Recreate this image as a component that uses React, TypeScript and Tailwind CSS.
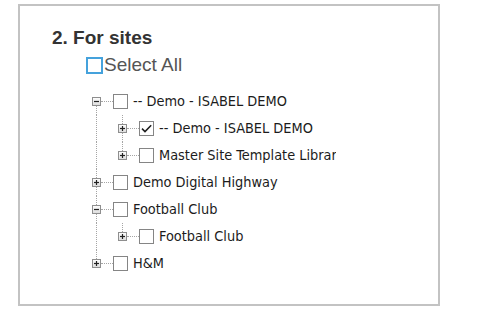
import React from 'react'

type Node = {
  label: string
  expanded?: boolean
  checked?: boolean
  children?: Node[]
}

const TREE: Node[] = [
  {
    label: '-- Demo - ISABEL DEMO',
    expanded: true,
    children: [
      { label: '-- Demo - ISABEL DEMO', checked: true },
      { label: 'Master Site Template Library' },
    ],
  },
  { label: 'Demo Digital Highway' },
  {
    label: 'Football Club',
    expanded: true,
    children: [{ label: 'Football Club' }],
  },
  { label: 'H&M' },
]

function Expander({ open }: { open: boolean }) {
  return (
    <svg width="9" height="9" viewBox="0 0 9 9" className="block">
      <defs>
        <linearGradient id="exp" x1="0" y1="0" x2="0" y2="1">
          <stop offset="0" stopColor="#ffffff" />
          <stop offset="1" stopColor="#dcdcdc" />
        </linearGradient>
      </defs>
      <rect x="0.5" y="0.5" width="8" height="8" fill="url(#exp)" stroke="#8e8e8e" />
      <path d="M2 4.5h5" stroke="#222" strokeWidth="1.2" />
      {!open && <path d="M4.5 2v5" stroke="#222" strokeWidth="1.2" />}
    </svg>
  )
}

function Box({ checked }: { checked?: boolean }) {
  return (
    <div className="w-[15px] h-[15px] border border-[#858585] bg-white shrink-0 flex items-center justify-center">
      {checked && (
        <svg width="13" height="13" viewBox="0 0 13 13">
          <path d="M2 6.6l3 3 6.2-6.4" fill="none" stroke="#1e1e1e" strokeWidth="1.5" />
        </svg>
      )}
    </div>
  )
}

// one 25px cell holding the expander and its dotted lines
function LineCell({ top, bottom, open }: { top: boolean; bottom: boolean; open: boolean }) {
  return (
    <div className="relative w-[25px] h-[27px] shrink-0">
      {top && <div className="absolute left-[8px] top-0 h-[9px] border-l border-dotted border-[#a5a5a5]" />}
      {bottom && <div className="absolute left-[8px] top-[18px] h-[9px] border-l border-dotted border-[#a5a5a5]" />}
      <div className="absolute left-[13px] top-[13px] w-[12px] border-t border-dotted border-[#a5a5a5]" />
      <div className="absolute left-[4px] top-[9px]">
        <Expander open={open} />
      </div>
    </div>
  )
}

function Row({ node, guides, top, bottom }: { node: Node; guides: boolean[]; top: boolean; bottom: boolean }) {
  return (
    <div className="flex items-center h-[27px]">
      {guides.map((g, i) => (
        <div key={i} className="relative w-[26px] h-[27px] shrink-0">
          {g && <div className="absolute left-[8px] top-0 h-[27px] border-l border-dotted border-[#a5a5a5]" />}
        </div>
      ))}
      <LineCell top={top} bottom={bottom} open={!!node.expanded} />
      <Box checked={node.checked} />
      <span className="ml-[5px] text-[14.4px] text-[#1c1c1c] font-['DejaVu_Sans_Condensed','DejaVu_Sans',sans-serif]">
        {node.label}
      </span>
    </div>
  )
}

export default function App() {
  const rows: React.ReactNode[] = []
  TREE.forEach((n, i) => {
    const last = i === TREE.length - 1
    rows.push(<Row key={`r${i}`} node={n} guides={[]} top={i > 0} bottom={!last} />)
    if (n.expanded && n.children) {
      n.children.forEach((c, j) => {
        rows.push(
          <Row
            key={`r${i}-${j}`}
            node={c}
            guides={[!last]}
            top={true}
            bottom={j < n.children!.length - 1}
          />
        )
      })
    }
  })

  return (
    <div className="w-[477px] h-[324px] bg-white pt-[4px] pl-[18px] font-['Liberation_Sans',Arial,sans-serif]">
      <div className="w-[422px] h-[302px] border-2 border-[#c3c3c3] flex flex-col">
        <h2 className="pt-[21px] pl-[32px] text-[19px] leading-[22px] font-bold text-[#333]">2. For sites</h2>
        <label className="mt-[5px] pl-[66px] flex items-center h-[22px] text-[19px] text-[#555]">
          <span className="w-[17px] h-[17px] border-2 border-[#45a2dc] bg-white shrink-0" />
          <span className="ml-[1px]">Select All</span>
        </label>
        <div className="mt-[12px] ml-[68px] w-[248px] overflow-hidden whitespace-nowrap">{rows}</div>
      </div>
    </div>
  )
}
